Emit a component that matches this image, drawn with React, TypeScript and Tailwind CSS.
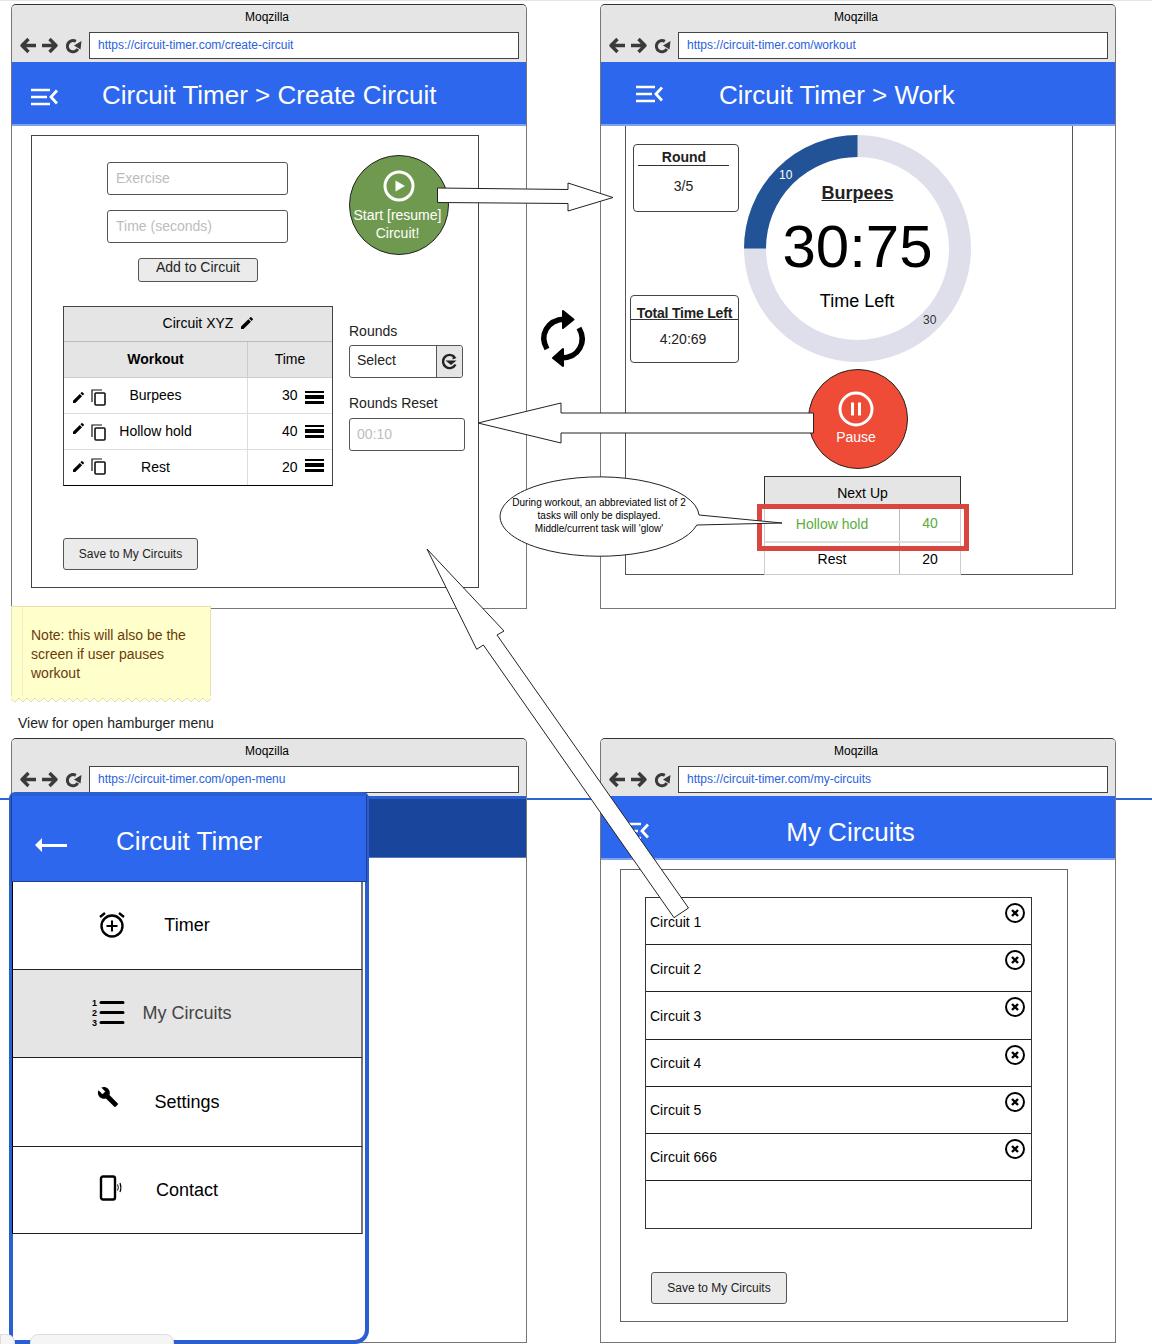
import React from "react";

const EDIT = "M3 17.25V21h3.75L17.81 9.94l-3.75-3.75L3 17.25zM20.71 7.04c.39-.39.39-1.02 0-1.41l-2.34-2.34c-.39-.39-1.02-.39-1.41 0l-1.83 1.83 3.75 3.75 1.83-1.83z";
const WRENCH = "M22.7 19l-9.1-9.1c.9-2.3.4-5-1.5-6.9-2-2-5-2.4-7.4-1.3L9 6 6 9 1.6 4.7C.4 7.1.9 10.1 2.9 12.1c1.9 1.9 4.6 2.4 6.9 1.5l9.1 9.1c.4.4 1 .4 1.4 0l2.3-2.3c.5-.4.5-1.1.1-1.4z";

function Pencil({ className = "" }: { className?: string }) {
  return (
    <svg viewBox="3 3 18 18" className={className} fill="#000">
      <path d={EDIT} />
    </svg>
  );
}

function Copy({ className = "" }: { className?: string }) {
  return (
    <svg width="16" height="17" viewBox="0 0 16 17" className={className} fill="none" stroke="#111">
      <path d="M1 13V1h10" strokeWidth="1.2" />
      <rect x="4" y="4" width="10" height="12" rx="1" strokeWidth="1.6" />
    </svg>
  );
}

function Bars({ className = "" }: { className?: string }) {
  return (
    <svg width="19" height="14" viewBox="0 0 19 14" className={className} fill="#000">
      <rect x="0" y="0" width="19" height="2" />
      <rect x="0" y="4" width="19" height="4" />
      <rect x="0" y="10" width="19" height="3" />
    </svg>
  );
}

function Reload() {
  return (
    <svg width="17" height="16" viewBox="0 0 17 16" fill="none">
      <path d="M12.8 11A5.6 5.6 0 1 1 10.8 3.4" stroke="#3a3a3a" strokeWidth="3" />
      <path d="M9 7.5 16.5 3 15.5 11.5z" fill="#3a3a3a" />
    </svg>
  );
}

function SelectReload() {
  return (
    <svg width="18" height="18" viewBox="0 0 18 18" fill="none">
      <path d="M14.5 11.5A6.6 6.6 0 1 1 13.5 4" stroke="#222" strokeWidth="2.4" />
      <path d="M4.5 7.5h11L10 12z" fill="#222" />
      <path d="M12 1.5 15.5 5 11.5 6.5z" fill="#222" />
    </svg>
  );
}

function NavArrows() {
  return (
    <div className="flex items-center w-[77px] pl-[7px] gap-[6px]">
      <svg width="17" height="17" viewBox="0 0 17 17" fill="none" stroke="#3a3a3a" strokeWidth="3.4" strokeLinejoin="round">
        <path d="M17 8.5H4M9.5 2 3 8.5 9.5 15" />
      </svg>
      <svg width="17" height="17" viewBox="0 0 17 17" fill="none" stroke="#3a3a3a" strokeWidth="3.4" strokeLinejoin="round">
        <path d="M0 8.5h13M7.5 2 14 8.5 7.5 15" />
      </svg>
      <Reload />
    </div>
  );
}

function MenuIcon({ className = "" }: { className?: string }) {
  return (
    <svg width="27" height="18" viewBox="0 0 27 18" fill="none" stroke="#fff" strokeWidth="2.4" className={className}>
      <path d="M0 2h19M0 9h16M0 16h19" />
      <path d="M26 2.5 20 9l6 6.5" strokeWidth="2.8" />
    </svg>
  );
}

function Browser({ url, className, children }: { url: string; className: string; children?: React.ReactNode }) {
  return (
    <div className={`absolute flex flex-col bg-white border border-[#777] border-t-[#333] rounded-t-[5px] ${className}`}>
      <div className="h-[57px] bg-[#e5e5e5] rounded-t-[5px] shrink-0">
        <div className="h-[27px] leading-[25px] text-center pr-[4px] text-[12px] text-black">Moqzilla</div>
        <div className="flex items-center">
          <NavArrows />
          <div className="flex-1 mr-[7px] h-[27px] leading-[25px] border border-[#444] bg-white pl-[8px] text-[12px] text-[#2a62dc]">
            {url}
          </div>
        </div>
      </div>
      {children}
    </div>
  );
}

function Header({ title, icon }: { title: string; icon: string }) {
  return (
    <div className="h-[64px] bg-[#2d67ee] border-b-2 border-[#7da2f2] flex items-center shrink-0 text-white text-[26px]">
      <div className={icon}>
        <MenuIcon />
      </div>
      <div className="pt-[5px]">{title}</div>
    </div>
  );
}

function Btn({ children, className }: { children: React.ReactNode; className: string }) {
  return (
    <div className={`bg-[#ebebeb] border border-[#555] rounded-[3px] text-center text-[#222] ${className}`}>
      {children}
    </div>
  );
}

const workoutRows = [
  { name: "Burpees", time: "30", pen: "translate-y-[2px]", copy: "translate-y-[1px]", bars: "translate-y-[1px]" },
  { name: "Hollow hold", time: "40", pen: "-translate-y-[3px]", copy: "", bars: "-translate-y-[1px]" },
  { name: "Rest", time: "20", pen: "-translate-y-[1px]", copy: "-translate-y-[2px]", bars: "-translate-y-[3px]" },
];

function CircuitTable() {
  return (
    <div className="w-[270px] h-[180px] border border-[#444] border-b-black flex flex-col text-[14px] text-black shrink-0">
      <div className="h-[35px] bg-[#e5e5e5] flex items-center justify-center gap-[8px] pl-[20px] pb-[2px] border-b border-[#bbb]">
        Circuit XYZ <Pencil className="w-[12px] h-[12px]" />
      </div>
      <div className="h-[36px] bg-[#e5e5e5] flex items-center border-b border-[#ccc]">
        <div className="w-[184px] text-center font-bold border-r border-[#ccc] h-full leading-[35px]">Workout</div>
        <div className="flex-1 text-center">Time</div>
      </div>
      {workoutRows.map((r) => (
        <div key={r.name} className="flex-1 flex items-center border-b border-[#ddd] last:border-b-0">
          <div className="relative w-[184px] h-full border-r border-[#ddd] flex items-center justify-center">
            <span>{r.name}</span>
            <Pencil className={`absolute left-[9px] top-[12px] w-[11px] h-[11px] ${r.pen}`} />
            <Copy className={`absolute left-[27px] top-[10px] ${r.copy}`} />
          </div>
          <div className="relative flex-1 h-full flex items-center pl-[34px]">
            {r.time}
            <Bars className={`absolute left-[57px] top-[12px] ${r.bars}`} />
          </div>
        </div>
      ))}
    </div>
  );
}

function CircuitPanel() {
  return (
    <div className="ml-[19px] mt-[9px] w-[448px] h-[453px] border border-[#444] text-[14px]">
      <div className="flex pl-[75px] pt-[19px] h-[146px]">
        <div className="w-[181px] pt-[7px]">
          <div className="h-[33px] border border-[#555] rounded-[3px] leading-[31px] pl-[8px] text-[#bdbdbd]">Exercise</div>
          <div className="h-[33px] mt-[15px] border border-[#555] rounded-[3px] leading-[31px] pl-[8px] text-[#bdbdbd]">Time (seconds)</div>
          <Btn className="ml-[31px] mt-[15px] w-[120px] h-[24px] leading-[17px]">Add to Circuit</Btn>
        </div>
        <div className="ml-[61px] w-[100px] h-[100px] rounded-full bg-[#6f994f] border border-[#222] flex flex-col items-center text-white pt-[14px] leading-[18px] shrink-0">
          <svg width="32" height="32" viewBox="0 0 32 32" fill="none">
            <circle cx="16" cy="16" r="14" stroke="#fff" strokeWidth="3" />
            <path d="M12.5 10.5 22 16l-9.5 5.5z" fill="#fff" />
          </svg>
          <div className="mt-[4px] pr-[3px] text-center whitespace-nowrap">Start [resume]</div>
          <div className="pr-[3px]">Circuit!</div>
        </div>
      </div>
      <div className="flex pl-[31px] mt-[24px]">
        <CircuitTable />
        <div className="ml-[16px] w-[116px] text-[#222]">
          <div className="mt-[17px] h-[16px] leading-[16px]">Rounds</div>
          <div className="mt-[6px] w-[114px] h-[33px] border border-[#555] rounded-[3px] flex items-center">
            <div className="flex-1 pl-[7px] pb-[2px]">Select</div>
            <div className="w-[26px] h-full border-l border-[#555] bg-[#e5e5e5] rounded-r-[3px] flex items-center justify-center">
              <SelectReload />
            </div>
          </div>
          <div className="mt-[17px] h-[16px] leading-[16px]">Rounds Reset</div>
          <div className="mt-[7px] h-[33px] border border-[#555] rounded-[3px] leading-[31px] pl-[7px] text-[#bdbdbd]">00:10</div>
        </div>
      </div>
      <Btn className="ml-[31px] mt-[52px] w-[135px] h-[32px] leading-[30px] text-[12px]">Save to My Circuits</Btn>
    </div>
  );
}

function Ring() {
  return (
    <div className="relative w-[227px] h-[227px] shrink-0">
      <svg width="227" height="227" viewBox="0 0 227 227" fill="none" className="absolute inset-0">
        <circle cx="113.5" cy="113.5" r="102.5" stroke="#dfdfeb" strokeWidth="22" />
        <path d="M113.5 11A102.5 102.5 0 0 0 11 113.5" stroke="#225396" strokeWidth="22" />
      </svg>
      <div className="absolute inset-0 flex flex-col items-center pt-[46px] text-black">
        <div className="h-[24px] leading-[24px] text-[18px] font-bold underline text-[#222]">Burpees</div>
        <div className="h-[70px] leading-[70px] mt-[7px] text-[60px]">30:75</div>
        <div className="h-[24px] leading-[24px] mt-[7px] pr-[1px] text-[18px]">Time Left</div>
      </div>
      <div className="absolute left-[35px] top-[33px] text-[12px] leading-[14px] text-white">10</div>
      <div className="absolute left-[179px] top-[178px] text-[12px] leading-[14px] text-[#333]">30</div>
    </div>
  );
}

function WorkPanel() {
  return (
    <div className="ml-[24px] w-[448px] h-[449px] border-x border-b border-[#555] pt-[9px] text-black">
      <div className="flex h-[228px]">
        <div className="w-[118px] pl-[7px] pt-[9px] text-[14px] text-[#222] text-center">
          <div className="w-[106px] h-[68px] border border-[#444] rounded-[4px] bg-white pr-[5px]">
            <div className="h-[15px] mt-[5px] leading-[15px] font-bold pl-[1px]">Round</div>
            <div className="h-px mx-[4px] bg-[#333]" />
            <div className="mt-[11px] leading-[18px]">3/5</div>
          </div>
          <div className="w-[109px] h-[68px] -ml-[3px] mt-[83px] border border-[#444] rounded-[4px] bg-white">
            <div className="h-[16px] mt-[7px] leading-[20px] font-bold tracking-[-0.2px]">Total Time Left</div>
            <div className="h-px bg-[#333]" />
            <div className="mt-[10px] leading-[18px] pr-[3px]">4:20:69</div>
          </div>
        </div>
        <Ring />
      </div>
      <div className="ml-[182px] mt-[6px] w-[100px] h-[100px] rounded-full bg-[#ef4c37] border border-[#222] flex flex-col items-center text-white pt-[21px] pr-[4px]">
        <svg width="36" height="36" viewBox="0 0 36 36" fill="none">
          <circle cx="18" cy="18" r="16" stroke="#fff" strokeWidth="3" />
          <path d="M14.5 11.5v13M21.5 11.5v13" stroke="#fff" strokeWidth="3" />
        </svg>
        <div className="text-[14px] leading-[18px] mt-[1px]">Pause</div>
      </div>
      <div className="relative ml-[138px] mt-[7px] w-[197px] h-[99px] bg-white border-x border-[#ccc] text-[14px]">
        <div className="h-[30px] -mx-px bg-[#e5e5e5] border border-b-0 border-[#333] text-center leading-[32px]">Next Up</div>
        <div className="h-[37px] flex items-center text-[#5cac3c] border-b-2 border-[#ddd]">
          <div className="w-[135px] h-full text-center leading-[36px] border-r border-[#bbb]">Hollow hold</div>
          <div className="flex-1 text-center">40</div>
        </div>
        <div className="h-[32px] flex items-center border-b border-[#ccc]">
          <div className="w-[135px] h-full text-center leading-[32px] border-r border-[#bbb]">Rest</div>
          <div className="flex-1 text-center pt-[2px]">20</div>
        </div>
        <div className="absolute left-[-8px] top-[28px] w-[212px] h-[47px] border-[5px] border-[#d9453f]" />
      </div>
    </div>
  );
}

const menu = [
  { label: "Timer", row: "h-[88px] bg-white text-black" },
  { label: "My Circuits", row: "h-[88px] bg-[#e5e5e5] text-[#444]" },
  { label: "Settings", row: "h-[89px] bg-white text-black" },
  { label: "Contact", row: "h-[87px] bg-white text-black" },
];

function MenuGlyph({ label }: { label: string }) {
  if (label === "Timer")
    return (
      <svg width="26" height="27" viewBox="0 0 26 27" fill="none" stroke="#000" className="absolute left-[86px] top-[29px]">
        <circle cx="13" cy="15" r="10.5" strokeWidth="2.4" />
        <path d="M13 9.5v11M7.5 15h11" strokeWidth="2" />
        <path d="M1 6 6 2M25 6l-5-4" strokeWidth="2.4" />
      </svg>
    );
  if (label === "My Circuits")
    return (
      <svg width="33" height="30" viewBox="0 0 33 30" className="absolute left-[79px] top-[28px]">
        <text x="0" y="8" fontSize="9" fontWeight="bold" fill="#000">1</text>
        <text x="0" y="18" fontSize="9" fontWeight="bold" fill="#000">2</text>
        <text x="0" y="28" fontSize="9" fontWeight="bold" fill="#000">3</text>
        <path d="M9 4.5h22M9 14.5h22M9 24.5h22" stroke="#000" strokeWidth="3" strokeLinecap="round" />
      </svg>
    );
  if (label === "Settings")
    return (
      <svg width="22" height="22" viewBox="0 0 24 24" fill="#000" className="absolute left-[84px] top-[28px]">
        <path d={WRENCH} />
      </svg>
    );
  return (
    <svg width="24" height="26" viewBox="0 0 24 26" fill="none" stroke="#000" className="absolute left-[86px] top-[28px]">
      <rect x="2" y="1.5" width="14" height="23" rx="2" strokeWidth="2.4" />
      <path d="M18.5 9.5c1 2 1 4 0 6" strokeWidth="1" />
      <path d="M21 8c1.2 3 1.2 6 0 9" strokeWidth="1.2" />
    </svg>
  );
}

function Drawer() {
  return (
    <div className="absolute left-[-3px] top-[53px] w-[360px] h-[552px] border-4 border-[#2b5fcf] rounded-t-[6px] rounded-br-[14px] bg-white">
      <div className="-mx-[2px] h-[86px] bg-[#2d67ee] border-x border-b border-[#1f3f8f] flex items-center text-white text-[26px] relative">
        <svg width="32" height="14" viewBox="0 0 32 14" fill="#fff" className="absolute left-[23px] top-[42px]">
          <path d="M7 0 0 7l7 7V9h25V6H7z" />
        </svg>
        <div className="w-full text-center pt-[5px]">Circuit Timer</div>
      </div>
      {menu.map((m) => (
        <div
          key={m.label}
          className={`relative -ml-px w-[351px] flex items-center justify-center text-[18px] border-l border-l-black border-r-2 border-r-[#777] border-b border-b-[#222] ${m.row}`}
        >
          {m.label}
          <MenuGlyph label={m.label} />
        </div>
      ))}
    </div>
  );
}

const circuits = ["Circuit 1", "Circuit 2", "Circuit 3", "Circuit 4", "Circuit 5", "Circuit 666"];

function CircuitsList() {
  return (
    <div className="ml-[19px] mt-[9px] w-[448px] h-[453px] border border-[#666] pt-[27px] pl-[24px] text-[14px] text-black">
      <div className="w-[387px] border border-[#333] flex flex-col">
        {circuits.map((c) => (
          <div key={c} className="relative h-[47.2px] border-b border-[#222] pl-[4px] pt-[14.5px] leading-[18px]">
            {c}
            <svg width="20" height="20" viewBox="0 0 20 20" fill="none" stroke="#000" className="absolute right-[6px] top-[5px]">
              <circle cx="10" cy="10" r="9" strokeWidth="2" />
              <path d="M7 7l6 6M13 7l-6 6" strokeWidth="2.4" />
            </svg>
          </div>
        ))}
        <div className="h-[47px]" />
      </div>
      <Btn className="ml-[6px] mt-[43px] w-[136px] h-[32px] leading-[30px] text-[12px]">Save to My Circuits</Btn>
    </div>
  );
}

function Overlay() {
  return (
    <svg width="1152" height="1344" viewBox="0 0 1152 1344" className="absolute inset-0 pointer-events-none">
      <path d="M437.5 188 568 189.5V183L613 197.5 568 211V203.5L437.5 202.5z" fill="#fff" stroke="#222" />
      <path d="M478 423 561 403v10H813.5v20H561v10z" fill="#fff" stroke="#222" />
      <path d="M427 549 504 631l-7 4 191.5 273L674 917.7 483.4 645 476.7 649.3z" fill="#fff" stroke="#222" />
      <g fill="none" stroke="#000" strokeWidth="5.5">
        <path d="M547 349C539 335 547 320 565 319" />
        <path d="M579 328C587 342 579 358 561 358" />
      </g>
      <path d="M563 311 573.5 319.5 563 328zM563 349 553 358 563 366z" fill="#000" stroke="#000" strokeWidth="2" strokeLinejoin="round" />
      <path d="M699 515A99.5 39.7 0 1 0 696.8 525L782 523z" fill="#fff" stroke="#222" />
    </svg>
  );
}

export default function App() {
  return (
    <div className="relative w-[1152px] h-[1344px] overflow-hidden bg-white font-['Liberation_Sans',Arial,sans-serif]">
      <div className="absolute left-0 right-0 top-0 h-px bg-[#e5e5e5]" />
      <div className="absolute left-0 right-0 top-[798px] h-[2px] bg-[#2b66d8]" />

      <Browser url="https://circuit-timer.com/create-circuit" className="left-[11px] top-[4px] w-[516px] h-[605px]">
        <Header title="Circuit Timer > Create Circuit" icon="pl-[19px] w-[90px] pt-[7px]" />
        <CircuitPanel />
      </Browser>

      <Browser url="https://circuit-timer.com/workout" className="left-[600px] top-[4px] w-[516px] h-[605px]">
        <Header title="Circuit Timer > Work" icon="pl-[35px] w-[118px] pt-[1px]" />
        <WorkPanel />
      </Browser>

      <Browser url="https://circuit-timer.com/open-menu" className="left-[11px] top-[738px] w-[516px] h-[605px]">
        <div className="h-[62px] bg-[#19459d] border-t-[3px] border-t-[#2b5fd0] border-b border-b-[#5878bd] shrink-0" />
        <Drawer />
      </Browser>

      <Browser url="https://circuit-timer.com/my-circuits" className="left-[600px] top-[738px] w-[516px] h-[605px]">
        <div className="relative h-[64px] bg-[#2d67ee] border-b-2 border-[#7da2f2] flex items-center justify-center text-white text-[26px] shrink-0">
          <MenuIcon className="absolute left-[21px] top-[26px]" />
          <span className="mr-[15px] translate-y-[5px]">My Circuits</span>
        </div>
        <CircuitsList />
      </Browser>

      <div className="absolute left-[11px] top-[606px] w-[200px] flex flex-col">
        <div className="relative h-[90px] bg-[#ffffcc] border-x border-t border-[#e6e2b0] pl-[19px] pt-[19px] text-[14px] leading-[19px] text-[#6b3a0a]">
          <div className="absolute left-[10px] top-0 bottom-0 w-px bg-[#f0edbc]" />
          Note: this will also be the
          <br />
          screen if user pauses
          <br />
          workout
        </div>
        <svg width="200" height="6" viewBox="0 0 200 6" className="block">
          <path
            d="M0 0V3L4 6 8 2 12 6 16 2 20 6 24 2 28 6 33 2 37 6 41 2 45 6 50 2 54 6 58 2 62 6 66 2 70 6 75 2 79 6 83 2 87 6 92 2 96 6 100 2 104 6 108 2 112 6 117 2 121 6 125 2 129 6 134 2 138 6 142 2 146 6 150 2 154 6 159 2 163 6 167 2 171 6 176 2 180 6 184 2 188 6 192 2 196 6 200 3V0z"
            fill="#ffffcc"
          />
          <path
            d="M0 3L4 6 8 2 12 6 16 2 20 6 24 2 28 6 33 2 37 6 41 2 45 6 50 2 54 6 58 2 62 6 66 2 70 6 75 2 79 6 83 2 87 6 92 2 96 6 100 2 104 6 108 2 112 6 117 2 121 6 125 2 129 6 134 2 138 6 142 2 146 6 150 2 154 6 159 2 163 6 167 2 171 6 176 2 180 6 184 2 188 6 192 2 196 6 200 3"
            fill="none"
            stroke="#d8d4a0"
            strokeWidth="0.8"
          />
        </svg>
      </div>
      <div className="absolute left-[18px] top-[714px] text-[14px] leading-[18px] text-[#222]">View for open hamburger menu</div>

      <div className="absolute left-0 top-[1334px] w-[15px] h-[12px] bg-[#f5f5f5] border border-[#ddd] rounded-tr-[8px]" />
      <div className="absolute left-[30px] top-[1334px] w-[144px] h-[12px] bg-[#f5f5f5] border border-[#ddd] rounded-t-[8px]" />

      <Overlay />

      <div className="absolute left-[499px] top-[496px] w-[200px] text-center text-[10px] leading-[13px] text-black">
        During workout, an abbreviated list of 2
        <br />
        tasks will only be displayed.
        <br />
        Middle/current task will 'glow'
      </div>
    </div>
  );
}
